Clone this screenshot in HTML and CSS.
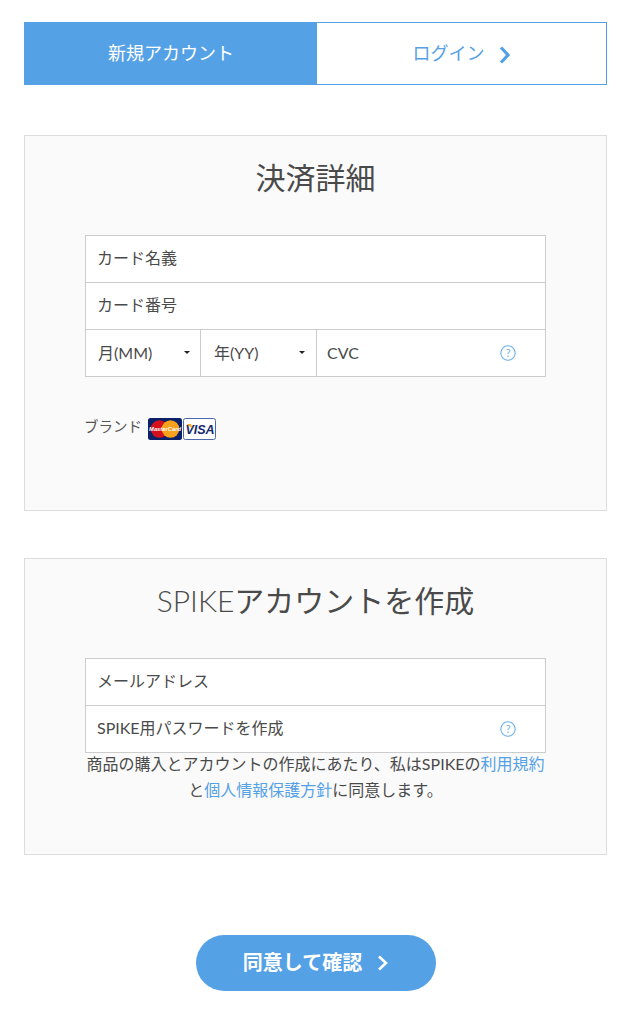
FILE: index.html
```html
<!DOCTYPE html>
<html lang="ja">
<head>
<meta charset="utf-8">
<title>SPIKE</title>
<link rel="stylesheet" href="styles.css">
</head>
<body>
<main class="page">
  <nav class="tabs">
    <div class="tab tab-active">新規アカウント</div>
    <div class="tab tab-link">ログイン
      <svg class="tab-chevron" width="13" height="20" viewBox="0 0 13 20"><path d="M3 2.5 L10 10 L3 17.5" fill="none" stroke="#55a1e6" stroke-width="3.2"/></svg>
    </div>
  </nav>

  <section class="card card-payment">
    <h2 class="card-title">決済詳細</h2>
    <div class="fields">
      <div class="row"><span class="cell">カード名義</span></div>
      <div class="row"><span class="cell">カード番号</span></div>
      <div class="row row-last">
        <div class="cell cell-select cell-month">月(MM)<i class="caret"></i></div>
        <div class="cell cell-select cell-year">年(YY)<i class="caret"></i></div>
        <div class="cell cell-cvc">CVC
          <svg class="help" width="16" height="16" viewBox="0 0 16 16"><circle cx="8" cy="8" r="7.2" fill="none" stroke="#6fb0ea" stroke-width="1.1"/><text x="8" y="11.6" text-anchor="middle" class="help-mark">?</text></svg>
        </div>
      </div>
    </div>
    <div class="brands">
      <span class="brand-label">ブランド</span>
      <svg class="brand-logo" width="34" height="22" viewBox="0 0 34 22">
        <rect width="34" height="22" rx="2.5" fill="#0a2068"/>
        <circle cx="11.5" cy="11" r="8.8" fill="#d3111c"/>
        <circle cx="22.5" cy="11" r="8.8" fill="#f7a11c"/>
        <text x="17" y="13" text-anchor="middle" class="mc-text">MasterCard</text>
      </svg>
      <svg class="brand-logo" width="33" height="22" viewBox="0 0 33 22">
        <rect x="0.5" y="0.5" width="32" height="21" rx="2" fill="#fff" stroke="#4f68ad"/>
        <text x="17" y="15.6" text-anchor="middle" class="visa-text">VISA</text>
        <path d="M3.5 6 L8 6 L9.5 10.5 Z" fill="#f5a81c"/>
      </svg>
    </div>
  </section>

  <section class="card card-account">
    <h2 class="card-title"><span class="latin-light">SPIKE</span>アカウントを作成</h2>
    <div class="fields">
      <div class="row"><span class="cell">メールアドレス</span></div>
      <div class="row row-last">
        <div class="cell cell-password">SPIKE用パスワードを作成
          <svg class="help" width="16" height="16" viewBox="0 0 16 16"><circle cx="8" cy="8" r="7.2" fill="none" stroke="#6fb0ea" stroke-width="1.1"/><text x="8" y="11.6" text-anchor="middle" class="help-mark">?</text></svg>
        </div>
      </div>
    </div>
    <p class="terms">商品の購入とアカウントの作成にあたり、私はSPIKEの<a href="#">利用規約</a><br>と<a href="#">個人情報保護方針</a>に同意します。</p>
  </section>

  <div class="actions">
    <button class="submit" type="button">同意して確認
      <svg class="submit-chevron" width="12" height="18" viewBox="0 0 12 18"><path d="M2 2.5 L9 9 L2 15.5" fill="none" stroke="#fff" stroke-width="2.6"/></svg>
    </button>
  </div>
</main>
</body>
</html>
```
FILE: styles.css
```css
* { box-sizing: border-box; }
html, body { margin: 0; background: #fff; }
body {
  font-family: Lato, "Noto Sans CJK JP", sans-serif;
  color: #4a4a4a;
}
.page { padding: 22px 28px 20px 24px; }

.tabs { display: flex; height: 63px; border: 1px solid #55a1e6; }
.tab {
  flex: 1 1 50%;
  display: flex;
  align-items: center;
  justify-content: center;
  font-size: 18px;
  font-weight: 400;
  padding-bottom: 4px;
}
.tab-active { background: #55a1e6; color: #fff; flex: 0 0 292px; }
.tab-link { color: #55a1e6; gap: 13px; background: #fff; }
.tab-chevron { margin-top: 6px; }

.card { border: 1px solid #ddd; background: #fafafa; padding: 0 60px; }
.card-payment { margin-top: 50px; height: 376px; }
.card-account { margin-top: 47px; height: 297px; }
.card-title {
  margin: 0;
  text-align: center;
  font-size: 30px;
  line-height: 44px;
  font-weight: 400;
  color: #4a4a4a;
  padding-top: 19px;
  height: 99px;
}
.latin-light { font-weight: 300; }

.fields { border: 1px solid #ccc; background: #fff; width: 461px; }
.row { display: flex; height: 47px; border-bottom: 1px solid #ccc; font-size: 16px; }
.row-last { border-bottom: 0; height: 46px; }
.cell { display: flex; align-items: center; padding: 0 0 4px 11px; flex: 1; }
.cell-select { flex: 0 0 115px; border-right: 1px solid #ccc; padding: 0 10px 2px 12px; justify-content: space-between; }
.cell-year { flex: 0 0 116px; padding-left: 13px; padding-right: 11px; }
.cell-cvc, .cell-password { justify-content: space-between; padding-right: 29px; }
.cell-cvc { padding-left: 10px; padding-bottom: 2px; }
.caret {
  width: 0;
  height: 0;
  border-left: 3px solid transparent;
  border-right: 3px solid transparent;
  border-top: 3px solid #222;
  margin-top: 1px;
}
.help { margin-top: 4px; }
.cell-cvc .help { margin-top: 2px; }
.help-mark { font-family: Lato, sans-serif; font-size: 10.5px; fill: #6fb0ea; }

.brands { display: flex; align-items: center; margin-top: 40px; height: 24px; margin-left: -1px; }
.brand-label { font-size: 14.5px; font-weight: 400; margin-right: 6px; margin-top: -8px; color: #555; }
.brand-logo { margin-right: 1px; }
.mc-text { font-family: "Liberation Sans", sans-serif; font-size: 5.8px; font-weight: 700; font-style: italic; fill: #fff; }
.visa-text { font-family: "Liberation Sans", sans-serif; font-size: 12.5px; font-weight: 700; font-style: italic; fill: #14286e; }

.terms { margin: -2px 0 0; width: 461px; text-align: center; font-size: 16px; line-height: 26px; font-weight: 400; white-space: nowrap; }
.terms a { color: #55a1e6; text-decoration: none; }

.actions { display: flex; justify-content: center; margin-top: 80px; }
.submit {
  width: 240px;
  height: 56px;
  margin-left: 1px;
  border: 0;
  border-radius: 28px;
  background: #55a1e6;
  color: #fff;
  font-family: Lato, "Noto Sans CJK JP", sans-serif;
  font-size: 20px;
  font-weight: 700;
  display: flex;
  align-items: center;
  justify-content: center;
  gap: 15px;
  padding: 0 0 4px;
}
.submit-chevron { margin-top: 4px; }
```
